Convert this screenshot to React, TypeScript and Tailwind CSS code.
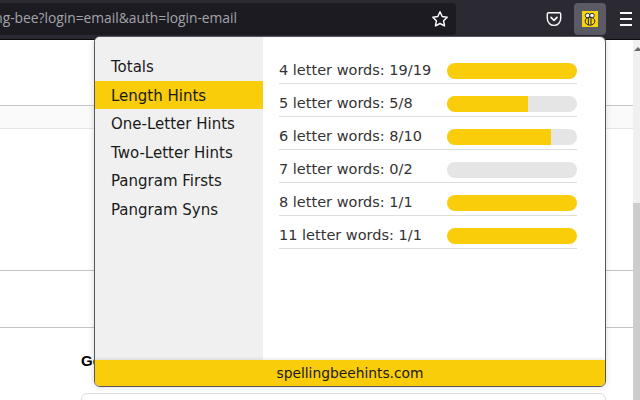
const menu = ['Totals', 'Length Hints', 'One-Letter Hints', 'Two-Letter Hints', 'Pangram Firsts', 'Pangram Syns']

const rows = [
  { label: '4 letter words: 19/19', pct: 100 },
  { label: '5 letter words: 5/8', pct: 62.5 },
  { label: '6 letter words: 8/10', pct: 80 },
  { label: '7 letter words: 0/2', pct: 0 },
  { label: '8 letter words: 1/1', pct: 100 },
  { label: '11 letter words: 1/1', pct: 100 },
]

function BeeIcon() {
  return (
    <svg width="16" height="16" viewBox="0 0 16 16" className="block">
      <rect width="16" height="16" fill="#f9d30a" />
      <circle cx="5.6" cy="4.6" r="2.3" fill="#f5f5f0" stroke="#222" strokeWidth="0.9" />
      <circle cx="10" cy="4.6" r="2.3" fill="#f5f5f0" stroke="#222" strokeWidth="0.9" />
      <ellipse cx="8" cy="10.2" rx="4.8" ry="4" fill="#f9d30a" stroke="#222" strokeWidth="1" />
      <path d="M6.4 6.6v7.2M9 6.6v7.2" stroke="#222" strokeWidth="1" fill="none" />
    </svg>
  )
}

function App() {
  return (
    <div className="relative h-[400px] w-[640px] overflow-hidden bg-white font-['Liberation_Sans',sans-serif]">
      {/* browser toolbar */}
      <div className="flex h-10 items-center border-b border-[#0c0c0d] bg-[#2b2a33] pb-[5px] pt-[3px]">
        <div className="flex h-8 w-[456px] items-center justify-between rounded-r bg-[#1c1b22] pr-2">
          <div className="flex w-[237px] justify-end overflow-hidden">
            <span className="shrink-0 whitespace-nowrap font-['Open_Sans',sans-serif] text-[13.8px] text-[#a3a3aa]">
              games/spelling-bee?login=email&amp;auth=login-email
            </span>
          </div>
          <svg width="18" height="18" viewBox="0 0 18 18" className="mr-[-1px]">
            <path d="M9 1.8l2.2 4.7 5 .7-3.6 3.6.9 5.1L9 13.5l-4.5 2.4.9-5.1-3.6-3.6 5-.7z" fill="none" stroke="#fbfbfe" strokeWidth="1.5" strokeLinejoin="round" />
          </svg>
        </div>
        <svg width="16" height="16" viewBox="0 0 16 16" className="ml-[90px]">
          <path d="M2.6 1.8h10.8c.8 0 1.3.5 1.3 1.3v4.5c0 3.8-3 6.8-6.7 6.8S1.3 11.4 1.3 7.6V3.1c0-.8.5-1.3 1.3-1.3z" fill="none" stroke="#fbfbfe" strokeWidth="1.4" />
          <path d="M5 6.4l3 3 3-3" fill="none" stroke="#fbfbfe" strokeWidth="1.6" strokeLinecap="round" strokeLinejoin="round" />
        </svg>
        <div className="ml-[12px] flex h-8 w-8 items-center justify-center rounded bg-[#5b5b66]">
          <BeeIcon />
        </div>
        <div className="ml-[14px] flex w-3 flex-col gap-[4px]">
          <div className="h-[2px] bg-[#fbfbfe]" />
          <div className="h-[2px] bg-[#fbfbfe]" />
          <div className="h-[2px] bg-[#fbfbfe]" />
        </div>
      </div>

      {/* page behind the popup */}
      <div className="flex h-[360px]">
        <div className="flex-1">
          <div className="h-[65px]" />
          <div className="h-[24px] border-y border-b-[#e5e5e5] border-t-[#c8c8c8] bg-[#fafafa]" />
          <div className="h-[141px]" />
          <div className="h-[58px] border-y border-b-[#c4c4c4] border-t-[#c4c4c4]" />
          <div className="pl-[81px] pt-[23px] text-[15px] font-bold leading-5 text-black">Go</div>
          <div className="ml-[81px] mr-[27px] mt-[22px] h-10 rounded-t-md border border-[#dcdcdc]" />
        </div>
        <div className="flex w-[7px] flex-col bg-[#f0f0f0]">
          <div className="flex h-[163px] justify-end pt-[6px]">
            <svg width="6" height="6" viewBox="0 0 6 6">
              <path d="M0 5l4-4 2 2v2z" fill="#6b6b6b" />
            </svg>
          </div>
          <div className="flex-1 bg-[#cdcdcd]" />
        </div>
      </div>

      {/* extension popup */}
      <div className="absolute left-[94px] top-[36px] flex h-[351px] w-[512px] flex-col overflow-hidden rounded-md border border-[#55555f] bg-white font-['DejaVu_Sans',sans-serif] shadow-[0_0_6px_rgba(0,0,0,0.15)]">
        <div className="flex flex-1">
          <div className="w-[168px] bg-[#f0f0f0] pt-[15px] text-[15px] text-[#1a1a1a]">
            {menu.map((item, i) => (
              <div
                key={item}
                className={i === 1 ? 'flex h-[28.5px] items-center bg-[#f9cd0a] pl-4 pt-[2px]' : 'flex h-[28.5px] items-center pl-4 pt-[2px]'}
              >
                {item}
              </div>
            ))}
          </div>
          <div className="flex-1 pl-4 pr-7 pt-[14px]">
            {rows.map((row) => (
              <div key={row.label} className="flex h-[33px] items-center justify-between border-b border-[#dddddd] pb-[1px] pt-[8px] text-[14.5px] text-[#333333]">
                <span className="whitespace-nowrap">{row.label}</span>
                <div className="h-4 w-[130px] overflow-hidden rounded-lg bg-[#e5e5e5]">
                  <div className="h-full bg-[#f9cd0a]" style={{ width: `${row.pct}%` }} />
                </div>
              </div>
            ))}
          </div>
        </div>
        <div className="flex h-[26px] items-center justify-center bg-[#f9cd0a] pt-[1px] text-[13.8px] text-[#1a1a1a] shadow-[0_-1px_3px_rgba(0,0,0,0.1)]">
          spellingbeehints.com
        </div>
      </div>
    </div>
  )
}

export default App
